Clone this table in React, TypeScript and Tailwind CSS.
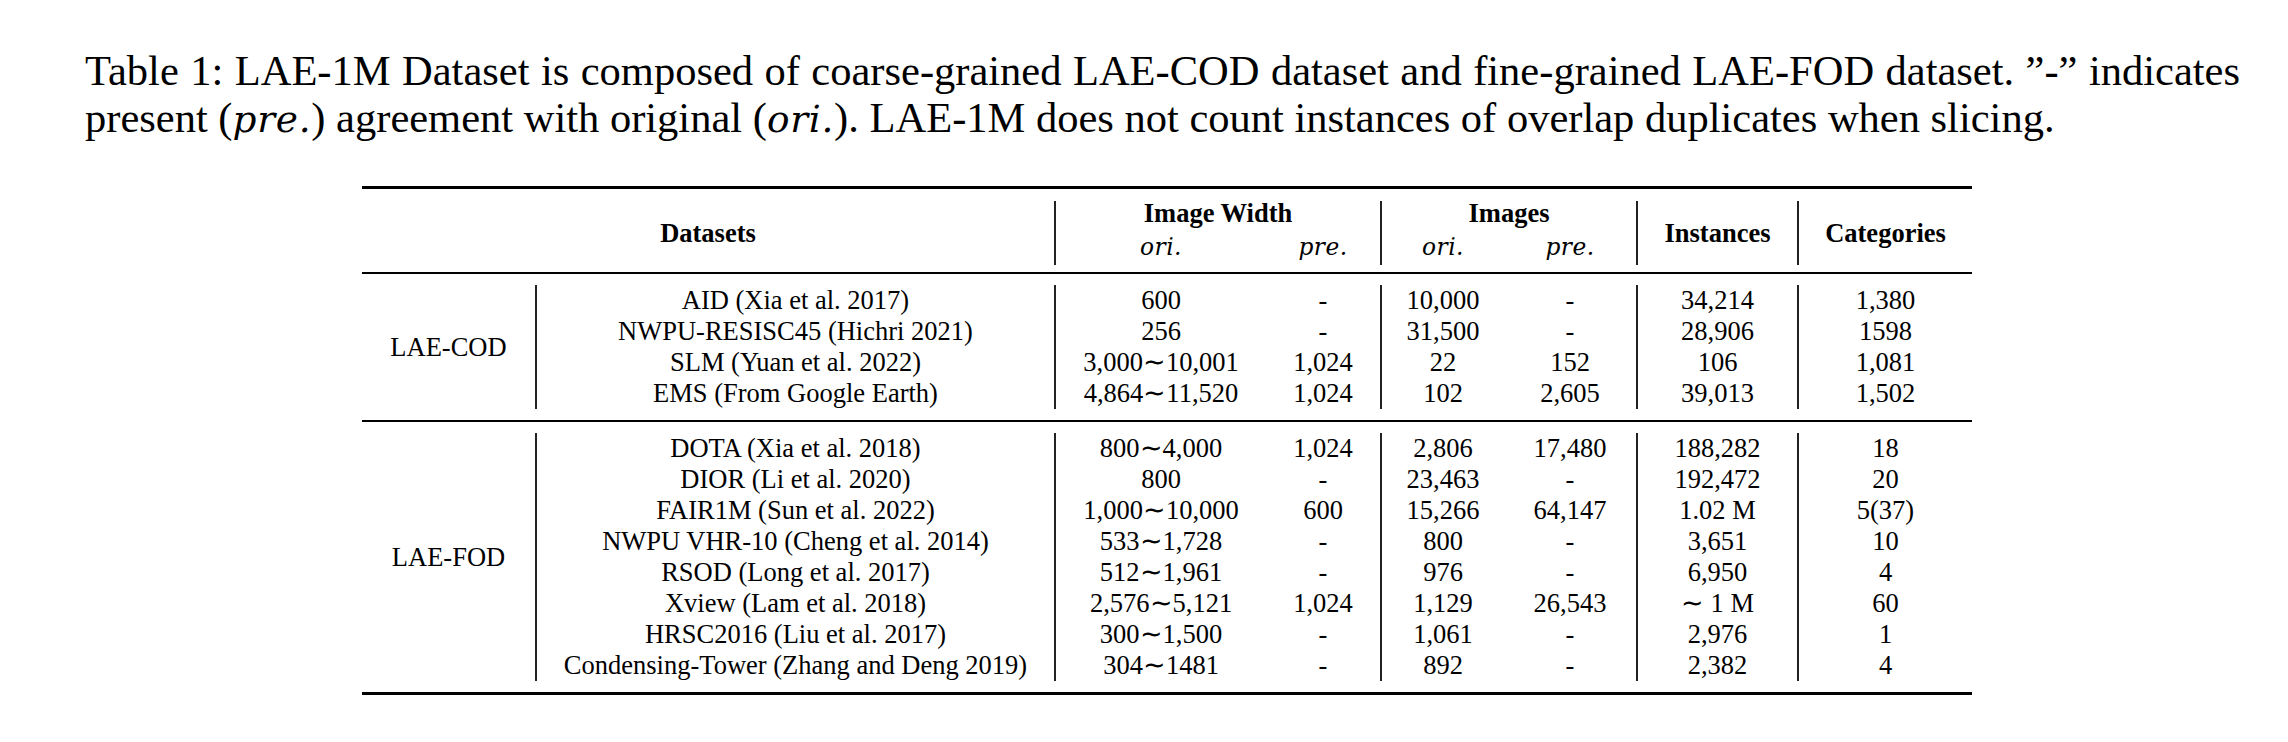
const COD = [
  ["AID (Xia et al. 2017)", "600", "-", "10,000", "-", "34,214", "1,380"],
  ["NWPU-RESISC45 (Hichri 2021)", "256", "-", "31,500", "-", "28,906", "1598"],
  ["SLM (Yuan et al. 2022)", "3,000∼10,001", "1,024", "22", "152", "106", "1,081"],
  ["EMS (From Google Earth)", "4,864∼11,520", "1,024", "102", "2,605", "39,013", "1,502"],
];

const FOD = [
  ["DOTA (Xia et al. 2018)", "800∼4,000", "1,024", "2,806", "17,480", "188,282", "18"],
  ["DIOR (Li et al. 2020)", "800", "-", "23,463", "-", "192,472", "20"],
  ["FAIR1M (Sun et al. 2022)", "1,000∼10,000", "600", "15,266", "64,147", "1.02 M", "5(37)"],
  ["NWPU VHR-10 (Cheng et al. 2014)", "533∼1,728", "-", "800", "-", "3,651", "10"],
  ["RSOD (Long et al. 2017)", "512∼1,961", "-", "976", "-", "6,950", "4"],
  ["Xview (Lam et al. 2018)", "2,576∼5,121", "1,024", "1,129", "26,543", "∼ 1 M", "60"],
  ["HRSC2016 (Liu et al. 2017)", "300∼1,500", "-", "1,061", "-", "2,976", "1"],
  ["Condensing-Tower (Zhang and Deng 2019)", "304∼1481", "-", "892", "-", "2,382", "4"],
];

function Row({ cells }: { cells: string[] }) {
  return (
    <div className="grid h-[31px] grid-cols-[519px_212px_114px_124px_132px_161px_175px]">
      <div className="flex items-center justify-center border-l-2 border-[#222]">{cells[0]}</div>
      <div className="flex items-center justify-center border-l-2 border-[#222]">{cells[1]}</div>
      <div className="flex items-center justify-center">{cells[2]}</div>
      <div className="flex items-center justify-center border-l-2 border-[#222]">{cells[3]}</div>
      <div className="flex items-center justify-center">{cells[4]}</div>
      <div className="flex items-center justify-center border-l-2 border-[#222]">{cells[5]}</div>
      <div className="flex items-center justify-center border-l-2 border-[#222]">{cells[6]}</div>
    </div>
  );
}

function Block({ label, rows }: { label: string; rows: string[][] }) {
  return (
    <div className="flex py-[11px]">
      <div className="flex w-[173px] items-center justify-center">{label}</div>
      <div>
        {rows.map((r) => (
          <Row key={r[0]} cells={r} />
        ))}
      </div>
    </div>
  );
}

// math-mode italic, as in $pre.$ / $ori.$
function Sub({ children }: { children: string }) {
  return <span className="font-['DejaVu_Serif',serif] text-[0.88em] italic leading-none tracking-[0.02em]">{children}</span>;
}

export default function App() {
  return (
    <div className="h-[742px] w-[2288px] overflow-hidden bg-white pt-[47px] font-['Liberation_Serif',serif] text-black">
      <div className="ml-[85px] w-[2155px] text-[42.5px] leading-[47px]">
        <div className="text-justify [text-align-last:justify]">
          Table 1: LAE-1M Dataset is composed of coarse-grained LAE-COD dataset and fine-grained LAE-FOD dataset. ”-” indicates
        </div>
        <div className="h-[47px]">
          present (<Sub>pre.</Sub>) agreement with original (<Sub>ori.</Sub>). LAE-1M does not count instances of overlap duplicates when slicing.
        </div>
      </div>

      <div className="ml-[362px] mt-[45px] w-[1610px] text-[26.5px] leading-[31px]">
        <div className="h-[3px] bg-black" />

        <div className="flex h-[83px] pb-[7px] pt-[12px] font-bold">
          <div className="flex w-[692px] items-center justify-center">Datasets</div>
          <div className="flex w-[326px] flex-col border-l-2 border-[#222]">
            <div className="flex h-[28px] items-end justify-center">Image Width</div>
            <div className="flex h-[36px] font-normal">
              <div className="flex w-[210px] items-center justify-center"><Sub>ori.</Sub></div>
              <div className="flex w-[114px] items-center justify-center"><Sub>pre.</Sub></div>
            </div>
          </div>
          <div className="flex w-[256px] flex-col border-l-2 border-[#222]">
            <div className="flex h-[28px] items-end justify-center">Images</div>
            <div className="flex h-[36px] font-normal">
              <div className="flex w-[122px] items-center justify-center"><Sub>ori.</Sub></div>
              <div className="flex w-[132px] items-center justify-center"><Sub>pre.</Sub></div>
            </div>
          </div>
          <div className="flex w-[161px] items-center justify-center border-l-2 border-[#222]">Instances</div>
          <div className="flex w-[175px] items-center justify-center border-l-2 border-[#222]">Categories</div>
        </div>

        <div className="h-[2px] bg-black" />
        <Block label="LAE-COD" rows={COD} />
        <div className="h-[2px] bg-black" />
        <Block label="LAE-FOD" rows={FOD} />
        <div className="h-[3px] bg-black" />
      </div>
    </div>
  );
}
